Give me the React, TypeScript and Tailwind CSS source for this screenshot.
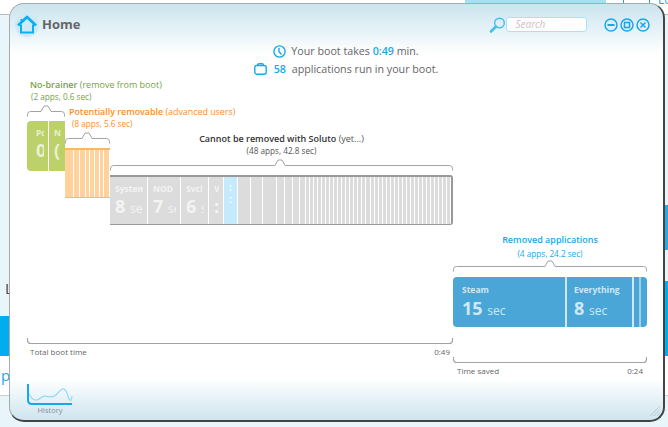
import React from 'react';

const font = "font-['Open_Sans','Noto_Sans',sans-serif]";

// bracket drawn above a bar, with a notch pointing at its label
const Bracket: React.FC<{ w: number; notch: number }> = ({ w, notch }) => (
  <svg width={w} height={12} className="block" fill="none">
    <path
      d={`M0.5 11.5 V9.5 Q0.5 6.5 3.5 6.5 H${notch - 5} L${notch - 2} 1 H${notch + 2} L${notch + 5} 6.5 H${w - 3.5} Q${w - 0.5} 6.5 ${w - 0.5} 9.5 V11.5`}
      stroke="#a3a3a3"
    />
  </svg>
);

const BottomBracket: React.FC<{ w: number }> = ({ w }) => (
  <svg width={w} height={7} className="block" fill="none">
    <path d={`M0.5 0 V2 Q0.5 5.5 4 5.5 H${w - 4} Q${w - 0.5} 5.5 ${w - 0.5} 2 V0`} stroke="#a3a3a3" strokeWidth="1.2" />
  </svg>
);

const Seg: React.FC<{ name: string; num: string; unit?: string; w: number; className: string }> = ({ name, num, unit, w, className }) => (
  <div style={{ width: w }} className={`h-full shrink-0 pr-[4px] pt-[6px] ${className}`}>
    <div className="h-full overflow-hidden whitespace-nowrap">
      <div className="text-[8.5px] font-bold leading-[11px] text-white/70">{name}</div>
      <div className="text-[18px] font-bold leading-[24px] text-white/70">
        {num} <span className="text-[12px] font-normal">{unit}</span>
      </div>
    </div>
  </div>
);

const greySegs = [13, 12, 14, 8, 8, 7, 6];
const thinSegs = Array.from({ length: 36 }, (_, i) => i);
const orangeSegs = [9, 6, 6, 4, 5, 5, 4, 6];

const Home: React.FC = () => (
  <svg width="24" height="24" viewBox="0 0 24 24" fill="none" className="shrink-0">
    <circle cx="12" cy="12" r="12" fill="#cfe9f5" />
    <path d="M3 12.5 L12 4 L21 12.5" stroke="#0cb0f2" strokeWidth="2.8" strokeLinejoin="round" />
    <path d="M6 11.5 V19.5 H18 V11.5 M6.5 8 V6" stroke="#0cb0f2" strokeWidth="2" />
  </svg>
);

const CircleBtn: React.FC<{ children: React.ReactNode }> = ({ children }) => (
  <svg width="14" height="14" viewBox="0 0 14 14" fill="none" stroke="#18a8ea" strokeWidth="1.5">
    <circle cx="7" cy="7" r="6" />
    {children}
  </svg>
);

export default function App() {
  return (
    <div className={`relative h-[427px] w-[668px] overflow-hidden bg-white ${font}`}>
      {/* desktop behind the window */}
      <div className="flex h-full flex-col">
        <div className="h-[15px] border-b border-[#bbb] bg-white" />
        <div className="h-[301px] bg-[#e8f6fc] text-[15px] leading-none text-[#444]">
          <div className="ml-[5px] mt-[266px]">L</div>
        </div>
        <div className="h-[40px] bg-[#00aeef]" />
        <div className="h-[40px] border-b border-[#ccc] bg-white pt-[9px] text-[15px] leading-5 text-[#18a8ea]">
          <span className="ml-px">p</span>
        </div>
        <div className="flex-1 bg-[#e8f6fc]" />
      </div>
      <div className="absolute left-[465px] top-0 h-[3px] w-[141px] bg-[#a5e0f5]" />
      <div className="absolute left-[623px] top-[-4px] h-[7px] w-[27px] border-x border-[#18a8ea] bg-white" />
      <div className="absolute left-[658px] top-[-6px] text-[12px] leading-none text-[#18a8ea]">Lo</div>
      <div className="absolute left-[664px] top-[205px] h-[45px] w-[4px] bg-[#2aa9e6]" />
      <div className="absolute left-[664px] top-[281px] h-[35px] w-[4px] bg-[#00aeef]" />

      {/* window */}
      <div className="absolute left-[9px] top-[3px] flex h-[419px] w-[656px] flex-col overflow-hidden rounded-[15px] border-b-2 border-l border-r-2 border-t border-b-[#444] border-l-[#aaa] border-r-[#444] border-t-[#aaa] bg-[linear-gradient(to_bottom,#cbe4ee_0px,#e4f2f7_25px,#ffffff_50px,#ffffff_375px,#e6f2f7_395px,#cfe5ee_416px)]">
        {/* title bar */}
        <div className="flex h-[38px] shrink-0 items-center pl-[5px] pt-[3px]">
          <Home />
          <span className="ml-[3px] text-[13px] font-bold text-[#666]">Home</span>
          <svg width="17" height="16" viewBox="0 0 17 16" fill="none" stroke="#45bdf0" strokeWidth="1.4" className="ml-[409px] shrink-0">
            <circle cx="10.5" cy="6" r="4.8" />
            <path d="M7 9.5 L2 14.5" strokeWidth="2.6" strokeLinecap="round" />
          </svg>
          <div className="flex h-[15px] w-[81px] shrink-0 items-center rounded-[3px] border border-[#a6e3fb] bg-white pl-[8px] text-[10px] italic text-[#c4c4c4]">
            Search
          </div>
          <div className="ml-[17px] flex shrink-0 gap-[2px]">
            <CircleBtn><path d="M3.5 7 H10.5" strokeWidth="1.8" /></CircleBtn>
            <CircleBtn><rect x="4.5" y="4.5" width="5" height="5" strokeWidth="1.6" /></CircleBtn>
            <CircleBtn><path d="M4.5 4.5 L9.5 9.5 M9.5 4.5 L4.5 9.5" /></CircleBtn>
          </div>
        </div>

        {/* summary */}
        <div className="ml-[19px] flex shrink-0 flex-col items-center text-[10.7px] leading-[18px] text-[#666]">
          <div className="flex items-center gap-[5px]">
            <svg width="13" height="13" viewBox="0 0 13 13" fill="none" stroke="#18a8ea" strokeWidth="1.4">
              <circle cx="6.5" cy="6.5" r="5.6" />
              <path d="M6 3 V6.8 L8.5 9.5" />
            </svg>
            <span>Your boot takes <b className="font-semibold text-[#18a8ea]">0:49</b> min.</span>
          </div>
          <div className="flex items-center gap-[7px]">
            <svg width="13" height="12" viewBox="0 0 13 12" fill="none" stroke="#18a8ea" strokeWidth="1.4">
              <rect x="0.8" y="2.5" width="11.4" height="8.7" rx="2" />
              <path d="M3.5 2.5 Q3.5 0.8 5 0.8 H8 Q9.5 0.8 9.5 2.5" />
            </svg>
            <span><b className="mr-[3px] font-semibold text-[#18a8ea]">58</b> applications run in your boot.</span>
          </div>
        </div>

        {/* boot chart */}
        <div className="flex shrink-0 pl-[17px]">
          <div className="w-[426px]">
            <div className="flex h-[147px]">
              <div className="mt-[1px] w-[38px] shrink-0 text-[9px] leading-[12px] whitespace-nowrap text-[#77a33c]">
                <div className="ml-[3px]"><span className="font-semibold">No-brainer</span> (remove from boot)</div>
                <div className="ml-[4px] text-[8.2px]">(2 apps, 0.6 sec)</div>
                <div className="mt-[2px]"><Bracket w={38} notch={19} /></div>
                <div className="mt-[4px] flex h-[50px] w-[38px] overflow-hidden rounded-l-[4px] bg-[#bdd16a]">
                  <Seg w={22} name="Pc" num="0" className="border-r border-white pl-[9px]" />
                  <Seg w={16} name="N" num="(" className="pl-[5px]" />
                </div>
              </div>
              <div className="mt-[28px] w-[45px] shrink-0 text-[8.9px] leading-[12px] whitespace-nowrap text-[#ff8c1f]">
                <div className="ml-[4px]"><span className="font-semibold">Potentially removable</span> (advanced users)</div>
                <div className="ml-[7px] text-[8.2px]">(8 apps, 5.6 sec)</div>
                <div className="mt-[2px]"><Bracket w={45} notch={22} /></div>
                <div className="mt-[4px] flex h-[50px] w-[45px] overflow-hidden border-y border-t-2 border-y-[#ffb566] bg-[#ffd19b]">
                  {orangeSegs.map((w, i) => (
                    <div key={i} style={{ width: w }} className="h-full shrink-0 border-r border-white" />
                  ))}
                </div>
              </div>
              <div className="mt-[55px] w-[343px] shrink-0 text-[9px] leading-[12px] whitespace-nowrap text-[#555]">
                <div className="text-center"><span className="font-semibold text-[#333]">Cannot be removed with Soluto</span> (yet...)</div>
                <div className="text-center text-[8.2px]">(48 apps, 42.8 sec)</div>
                <div className="mt-[2px]"><Bracket w={343} notch={170} /></div>
                <div className="mt-[4px] flex h-[50px] w-[343px] overflow-hidden rounded-r-[3px] border-y-2 border-r-2 border-b border-y-[#999] border-r-[#999] bg-[#dcdcdc]">
                  <Seg w={38} name="System" num="8" unit="sec" className="border-r border-white pl-[5px]" />
                  <Seg w={33} name="NOD" num="7" unit="sec" className="border-r border-white pl-[5px]" />
                  <Seg w={28} name="Svcl" num="6" unit="sec" className="border-r border-white pl-[5px]" />
                  <Seg w={15} name="V" num=":" className="border-r border-white pl-[5px]" />
                  <div className="flex h-full w-[14px] shrink-0 flex-col items-center border-r border-white bg-[#c4eafc] pt-[4px] text-[10px] font-bold leading-[12px] text-white">
                    <span>:</span>
                    <span>:</span>
                  </div>
                  {greySegs.map((w, i) => (
                    <div key={i} style={{ width: w }} className="h-full shrink-0 border-r border-white" />
                  ))}
                  {thinSegs.map(i => (
                    <div key={i} className="h-full flex-1 border-r border-white" />
                  ))}
                </div>
              </div>
            </div>
            <div className="mt-[113px]"><BottomBracket w={426} /></div>
            <div className="mt-[1px] flex justify-between px-[3px] text-[8px] leading-[12px] text-[#666]">
              <span>Total boot time</span>
              <span>0:49</span>
            </div>
          </div>

          <div className="mt-[156px] w-[194px] shrink-0">
            <div className="text-center text-[9px] leading-[12px] text-[#18a8ea]">
              <div className="font-semibold">Removed applications</div>
              <div className="mt-[2px] text-[8.2px]">(4 apps, 24.2 sec)</div>
            </div>
            <div><Bracket w={194} notch={97} /></div>
            <div className="mt-[5px] flex h-[50px] overflow-hidden rounded-[4px] bg-[#4ba6d8] text-[#cfe8f5]">
              <div className="w-[114px] shrink-0 border-r-2 border-[#cfe8f5] pl-[9px] pt-[7px]">
                <div className="text-[8.5px] font-bold leading-[12px]">Steam</div>
                <div className="text-[18px] font-bold leading-[25px]">15 <span className="text-[12px] font-normal">sec</span></div>
              </div>
              <div className="w-[67px] shrink-0 border-r-2 border-[#cfe8f5] pl-[7px] pt-[7px]">
                <div className="text-[8.5px] font-bold leading-[12px]">Everything</div>
                <div className="text-[18px] font-bold leading-[25px]">8 <span className="text-[12px] font-normal">sec</span></div>
              </div>
              <div className="w-[7px] shrink-0 border-r-2 border-[#9fd0ea]" />
            </div>
            <div className="mt-[30px]"><BottomBracket w={194} /></div>
            <div className="mt-[1px] flex justify-between px-[4px] text-[8px] leading-[12px] text-[#666]">
              <span>Time saved</span>
              <span>0:24</span>
            </div>
          </div>
        </div>

        {/* history */}
        <div className="mt-auto box-content w-[46px] pb-[5px] pl-[17px]">
          <svg width="46" height="21" viewBox="0 0 46 21" fill="none" className="block">
            <path d="M2 10 C6 18 10 17 15 13 C20 10 23 16 29 11 C34 5 37 2 40 9 C42 16 44 20 45 12" stroke="#8fdcfa" strokeWidth="1.2" />
            <path d="M1 0 V16 Q1 20 5 20 H45" stroke="#18a8ea" strokeWidth="2" />
          </svg>
          <div className="text-center text-[7.5px] leading-[10px] text-[#8a8a9a]">History</div>
        </div>

        {/* resize grip */}
        <svg width="12" height="12" viewBox="0 0 12 12" stroke="#b5c9d2" className="absolute bottom-[3px] right-[2px]">
          <path d="M1 11 L11 1 M4.5 11 L11 4.5 M8 11 L11 8" />
        </svg>
      </div>
    </div>
  );
}
